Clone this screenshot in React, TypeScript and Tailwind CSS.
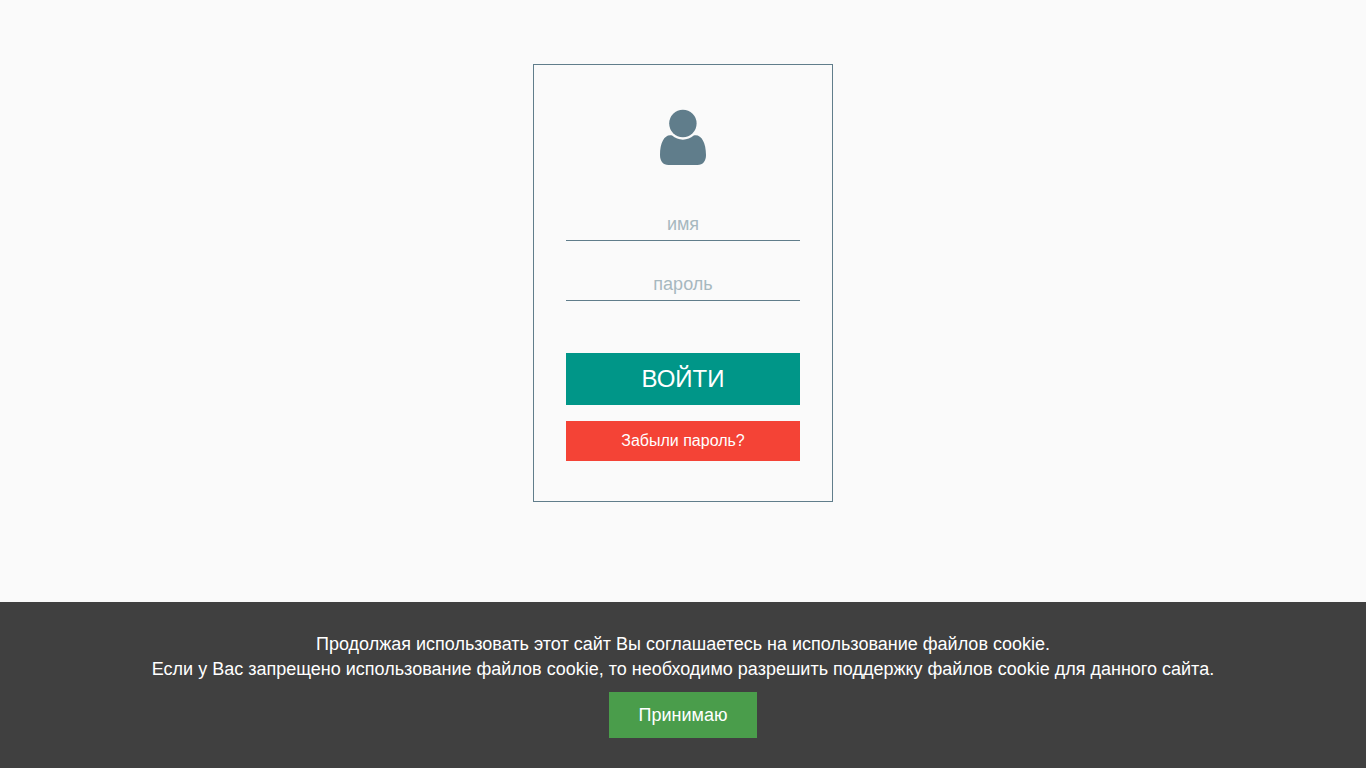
import { useState } from "react";
import type { InputHTMLAttributes } from "react";

type FieldProps = InputHTMLAttributes<HTMLInputElement> & {
  name: string;
  label: string;
};

function UserIcon() {
  return (
    <svg viewBox="0 0 46 56" className="mx-auto h-14 w-[46px] fill-[#607d8b]" aria-hidden="true">
      <circle cx="22.9" cy="14.5" r="13.7" />
      <path d="M12.1 26.6A16.2 16.2 0 0 0 33.7 26.6C40.8 24.8 46 33 46 46C46 52 43 56 37.5 56H8.5C3 56 0 52 0 46C0 33 5 24.8 12.1 26.6Z" />
    </svg>
  );
}

function Field({ name, label, ...props }: FieldProps) {
  return (
    <input
      name={name}
      aria-label={label}
      placeholder={label}
      className="block h-8 w-full border-b border-[#607d8b] bg-transparent text-center text-lg text-[#607d8b] outline-none placeholder:text-[#a7b8bf]"
      {...props}
    />
  );
}

function LoginForm() {
  return (
    <form
      onSubmit={(event) => event.preventDefault()}
      className="w-full max-w-[300px] border border-[#607d8b] px-8 pt-11 pb-10"
    >
      <UserIcon />
      <div className="mt-11 space-y-7">
        <Field name="login" label="имя" type="text" autoComplete="username" />
        <Field name="password" label="пароль" type="password" autoComplete="current-password" />
      </div>
      <div className="mt-13 space-y-4">
        <button type="submit" className="block h-13 w-full cursor-pointer bg-[#009688] text-2xl text-white">
          ВОЙТИ
        </button>
        <button type="button" className="block h-10 w-full cursor-pointer bg-[#f44336] text-base text-white">
          Забыли пароль?
        </button>
      </div>
    </form>
  );
}

function CookieNotice({ onAccept }: { onAccept: () => void }) {
  return (
    <div className="fixed inset-x-0 bottom-0 bg-[#404040] px-4 py-[30px] text-center text-lg/[25px] text-white">
      <p>Продолжая использовать этот сайт Вы соглашаетесь на использование файлов cookie.</p>
      <p>
        Если у Вас запрещено использование файлов cookie, то необходимо разрешить поддержку файлов cookie для
        данного сайта.
      </p>
      <button
        type="button"
        onClick={onAccept}
        className="mx-auto mt-[10px] block h-[46px] cursor-pointer bg-[#4a9d4b] px-[30px]"
      >
        Принимаю
      </button>
    </div>
  );
}

export default function App() {
  const [accepted, setAccepted] = useState(false);

  return (
    <div className="min-h-screen bg-[#fafafa] font-['Liberation_Sans',Arial,sans-serif]">
      <main className="flex justify-center px-4 pt-16">
        <LoginForm />
      </main>
      {accepted ? null : <CookieNotice onAccept={() => setAccepted(true)} />}
    </div>
  );
}
